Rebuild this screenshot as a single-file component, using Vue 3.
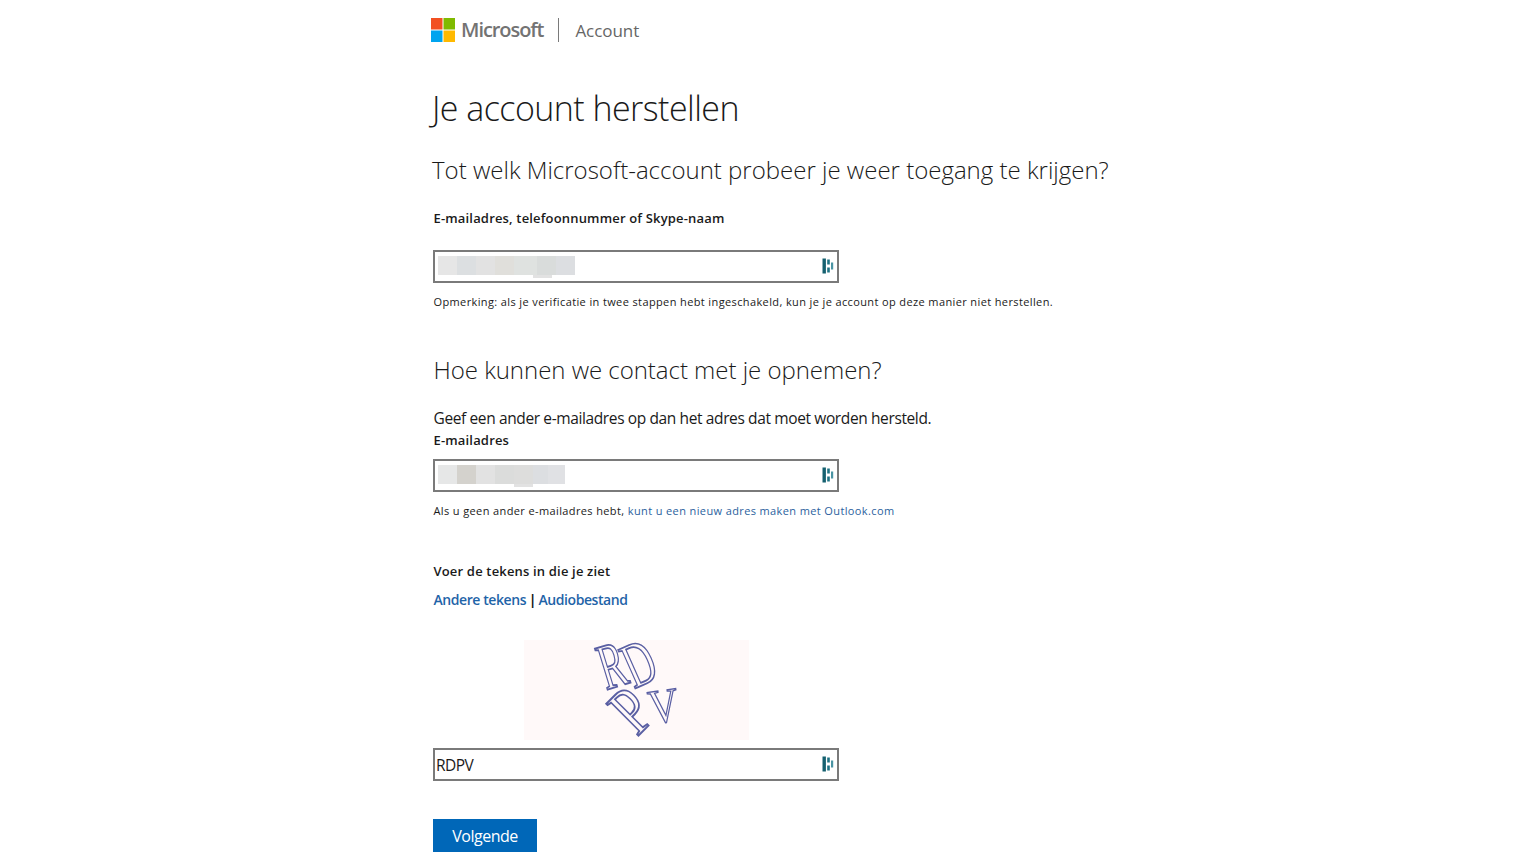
<template>
  <div class="page">
    <header class="header">
      <svg class="ms-logo" width="24" height="24" viewBox="0 0 24 24">
        <rect x="0" y="0" width="11.5" height="11.5" fill="#f25022" />
        <rect x="12.5" y="0" width="11.5" height="11.5" fill="#7fba00" />
        <rect x="0" y="12.5" width="11.5" height="11.5" fill="#00a4ef" />
        <rect x="12.5" y="12.5" width="11.5" height="11.5" fill="#ffb900" />
      </svg>
      <span class="brand">Microsoft</span>
      <span class="divider"></span>
      <span class="product">Account</span>
    </header>

    <h1 class="title">Je account herstellen</h1>
    <h2 class="subtitle first">Tot welk Microsoft-account probeer je weer toegang te krijgen?</h2>

    <label class="label top">E-mailadres, telefoonnummer of Skype-naam</label>
    <div class="field first-field">
      <div class="blur">
        <span v-for="(c, i) in blurOne" :key="i" :style="{ width: c.w + 'px', background: c.color }"></span>
        <i class="smudge one"></i>
      </div>
      <svg class="field-icon" width="12" height="16" viewBox="0 0 12 16">
        <rect x="0.5" y="0.5" width="3.4" height="15" fill="#15606f" />
        <rect x="5.2" y="1.5" width="2.6" height="5" fill="#1f7384" />
        <rect x="5.2" y="9.5" width="2.6" height="5" fill="#1f7384" />
        <rect x="9" y="4.5" width="2.2" height="7" fill="#4a94a3" />
      </svg>
    </div>
    <p class="note">Opmerking: als je verificatie in twee stappen hebt ingeschakeld, kun je je account op deze manier niet herstellen.</p>

    <h2 class="subtitle second">Hoe kunnen we contact met je opnemen?</h2>
    <p class="intro">Geef een ander e-mailadres op dan het adres dat moet worden hersteld.</p>
    <label class="label mail">E-mailadres</label>
    <div class="field second-field">
      <div class="blur">
        <span v-for="(c, i) in blurTwo" :key="i" :style="{ width: c.w + 'px', background: c.color }"></span>
        <i class="smudge two"></i>
      </div>
      <svg class="field-icon" width="12" height="16" viewBox="0 0 12 16">
        <rect x="0.5" y="0.5" width="3.4" height="15" fill="#15606f" />
        <rect x="5.2" y="1.5" width="2.6" height="5" fill="#1f7384" />
        <rect x="5.2" y="9.5" width="2.6" height="5" fill="#1f7384" />
        <rect x="9" y="4.5" width="2.2" height="7" fill="#4a94a3" />
      </svg>
    </div>
    <p class="note">Als u geen ander e-mailadres hebt, <a class="note-link" href="#">kunt u een nieuw adres maken met Outlook.com</a></p>

    <label class="label captcha-label">Voer de tekens in die je ziet</label>
    <div class="captcha-links">
      <a href="#">Andere tekens</a><b>|</b><a href="#">Audiobestand</a>
    </div>

    <div class="captcha-wrap">
      <svg class="captcha" width="225" height="100" viewBox="0 0 225 100">
        <rect width="225" height="100" fill="#fff9f9" />
        <g class="captcha-text" font-family="Liberation Serif, serif" font-size="46">
          <text transform="translate(82 50) rotate(-17) scale(0.85 1.42)">R</text>
          <text transform="translate(110 49) rotate(-24) scale(0.9 1.4)">D</text>
          <text transform="translate(113 97) rotate(-45) scale(1.15 1.5)">P</text>
          <text transform="translate(127 84) rotate(-8) scale(0.9 1.05)">V</text>
        </g>
      </svg>
    </div>

    <div class="field captcha-field">
      <span class="value">RDPV</span>
      <svg class="field-icon" width="12" height="16" viewBox="0 0 12 16">
        <rect x="0.5" y="0.5" width="3.4" height="15" fill="#15606f" />
        <rect x="5.2" y="1.5" width="2.6" height="5" fill="#1f7384" />
        <rect x="5.2" y="9.5" width="2.6" height="5" fill="#1f7384" />
        <rect x="9" y="4.5" width="2.2" height="7" fill="#4a94a3" />
      </svg>
    </div>

    <button class="next">Volgende</button>
  </div>
</template>

<script setup>
const blurOne = [
  { w: 19, color: '#e6e6e6' },
  { w: 19, color: '#dcdfe1' },
  { w: 19, color: '#e2e2e2' },
  { w: 19, color: '#e0dfdb' },
  { w: 23, color: '#dfe2e0' },
  { w: 19, color: '#d9dcdb' },
  { w: 19, color: '#dcdee1' }
]
const blurTwo = [
  { w: 19, color: '#e6e7e7' },
  { w: 19, color: '#d4d2cd' },
  { w: 19, color: '#e2e2e2' },
  { w: 19, color: '#dbdcdb' },
  { w: 19, color: '#dddddc' },
  { w: 15, color: '#dcdee1' },
  { w: 17, color: '#e0e1e4' }
]
</script>

<style scoped>
.page {
  box-sizing: border-box;
  width: 1535px;
  height: 863px;
  overflow: hidden;
  padding: 16px 0 0 433px;
  font-family: 'Open Sans', 'Noto Sans', sans-serif;
  color: #1a1a1a;
  background: #fff;
}

.header {
  display: flex;
  align-items: center;
  height: 27px;
  margin-left: -2px;
}

.ms-logo {
  flex: none;
}

.brand {
  margin-left: 6px;
  font-size: 20px;
  font-weight: 600;
  letter-spacing: -1.05px;
  color: #737373;
}

.divider {
  width: 1px;
  height: 24px;
  margin: 0 16px 0 15px;
  background: #7a7a7a;
}

.product {
  margin-top: 2px;
  font-size: 17px;
  letter-spacing: -0.05px;
  color: #666;
}

.title {
  margin: 42px 0 0 -1px;
  font-size: 34px;
  line-height: 46px;
  font-weight: 300;
  letter-spacing: -0.55px;
}

.subtitle {
  margin: 0;
  font-size: 24px;
  line-height: 32px;
  font-weight: 300;
}

.subtitle.first {
  margin: 23px 0 0 -1px;
}

.subtitle.second {
  margin: 44px 0 0 0.5px;
  letter-spacing: -0.03px;
}

.label {
  display: block;
  margin-left: 0.5px;
  font-size: 13px;
  line-height: 20px;
  font-weight: 600;
  letter-spacing: 0.17px;
}

.label.top {
  margin-top: 22px;
}

.label.mail {
  margin-top: 1px;
}

.field {
  box-sizing: border-box;
  position: relative;
  display: flex;
  align-items: center;
  width: 406px;
  height: 33px;
  border: 2px solid #7a7a7a;
  background: #fff;
}

.first-field {
  margin-top: 22px;
}

.second-field {
  margin-top: 9px;
}

.captcha-field {
  margin-top: 8px;
}

.blur {
  position: relative;
  display: flex;
  height: 19px;
  margin: -2px 0 0 3px;
  filter: blur(0.6px);
}

.blur span {
  display: block;
}

.smudge {
  position: absolute;
  top: 19px;
  height: 3px;
  background: #e2e2e2;
}

.smudge.one {
  left: 95px;
  width: 19px;
}

.smudge.two {
  left: 76px;
  width: 19px;
}

.field-icon {
  position: absolute;
  right: 3px;
  top: 6px;
}

.value {
  margin-left: 1px;
  font-size: 15.5px;
  letter-spacing: -0.55px;
}

.note {
  margin: 11px 0 0 0.5px;
  font-size: 11px;
  line-height: 16px;
  letter-spacing: 0.38px;
}

.note-link {
  color: #2b5f9e;
  text-decoration: none;
}

.intro {
  margin: 21px 0 0 0.5px;
  font-size: 15.5px;
  line-height: 22px;
  letter-spacing: -0.38px;
}

.label.captcha-label {
  margin-top: 42px;
}

.captcha-links {
  margin: 9px 0 0 0.5px;
  font-size: 14px;
  line-height: 20px;
  font-weight: 600;
  letter-spacing: -0.42px;
}

.captcha-links a {
  color: #1f64a8;
  text-decoration: none;
}

.captcha-links b {
  margin: 0 2.5px;
  font-weight: 700;
}

.captcha-wrap {
  display: flex;
  justify-content: center;
  width: 406px;
  margin-top: 30px;
}

.captcha {
  display: block;
  overflow: visible;
}

.captcha-text {
  fill: none;
  stroke: #5a5fa3;
  stroke-width: 1.3;
  filter: blur(0.3px);
}

.next {
  display: block;
  width: 104px;
  height: 33px;
  margin-top: 38px;
  padding: 0;
  border: none;
  background: #0067b8;
  color: #fff;
  font-family: inherit;
  font-size: 16px;
  letter-spacing: -0.5px;
}
</style>
